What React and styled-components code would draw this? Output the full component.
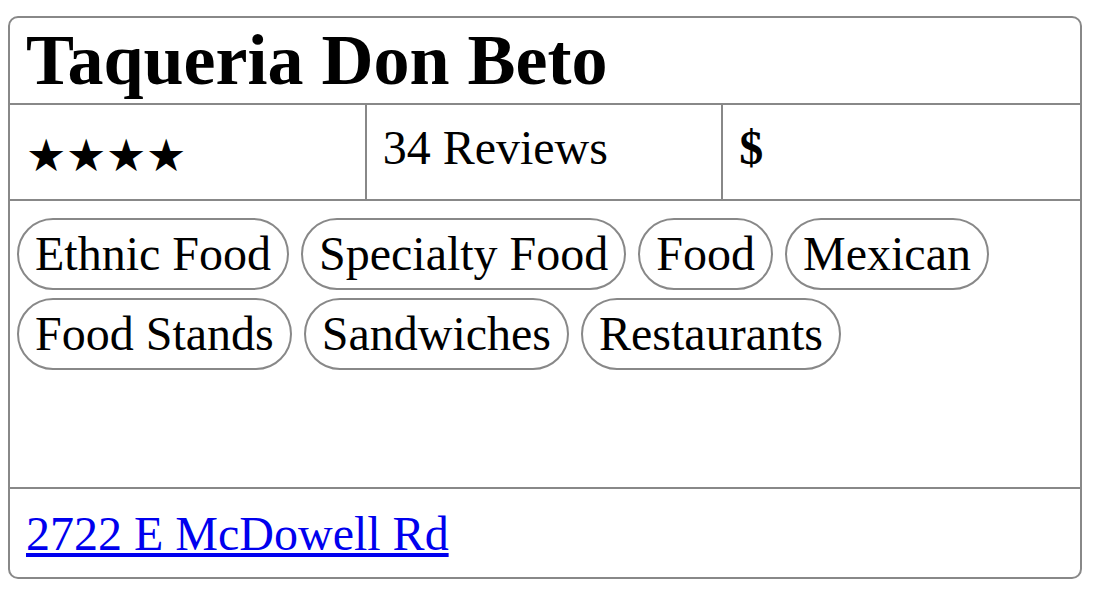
import React from 'react';
import styled, { createGlobalStyle } from 'styled-components';

const GlobalStyle = createGlobalStyle`
  body {
    margin: 0;
    font-family: "Liberation Serif", "Times New Roman", serif;
    background: #fff;
    color: #000;
  }
`;

const Page = styled.div`
  padding: 16px 13px 0 8px;
`;

const Card = styled.div`
  box-sizing: border-box;
  height: 563px;
  border: 2px solid #888;
  border-radius: 10px;
  display: flex;
  flex-direction: column;
  font-size: 48px;
`;

const Title = styled.h2`
  margin: 0;
  padding: 1px 16px;
  font-size: 72px;
  font-weight: bold;
  line-height: 83px;
  border-bottom: 2px solid #888;
`;

const Stats = styled.div`
  display: grid;
  grid-template-columns: 1fr 1fr 1fr;
  height: 96px;
  box-sizing: border-box;
  border-bottom: 2px solid #888;
`;

const Stat = styled.div`
  padding: ${(p) => (p.$stars ? '25px 16px 0' : '16px 16px 0')};
  font-size: ${(p) => (p.$stars ? '45px' : '48px')};
  line-height: 53px;
  font-weight: ${(p) => (p.$bold ? 'bold' : 'normal')};
  border-right: ${(p) => (p.$last ? 'none' : '2px solid #888')};
`;

const Tags = styled.div`
  flex: 1;
  display: flex;
  flex-wrap: wrap;
  align-content: flex-start;
  column-gap: 12px;
  row-gap: 8px;
  padding: 17px 7px 0;
  border-bottom: 2px solid #888;
`;

const Tag = styled.span`
  display: inline-block;
  padding: 7px 16px;
  line-height: 54px;
  border: 2px solid #888;
  border-radius: 40px;
`;

const Footer = styled.div`
  padding: 18px 16px 0;
  height: 88px;
  box-sizing: border-box;
  line-height: 53px;
`;

const Address = styled.a`
  color: #0000ee;
  text-decoration: underline;
`;

const business = {
  name: 'Taqueria Don Beto',
  stars: 4,
  reviews: 34,
  price: '$',
  categories: ['Ethnic Food', 'Specialty Food', 'Food', 'Mexican', 'Food Stands', 'Sandwiches', 'Restaurants'],
  address: '2722 E McDowell Rd',
};

export default function App() {
  return (
    <>
      <GlobalStyle />
      <Page>
        <Card>
          <Title>{business.name}</Title>
          <Stats>
            <Stat $stars>{'★'.repeat(business.stars)}</Stat>
            <Stat>{business.reviews} Reviews</Stat>
            <Stat $bold $last>{business.price}</Stat>
          </Stats>
          <Tags>
            {business.categories.map((c) => (
              <Tag key={c}>{c}</Tag>
            ))}
          </Tags>
          <Footer>
            <Address href="#">{business.address}</Address>
          </Footer>
        </Card>
      </Page>
    </>
  );
}
